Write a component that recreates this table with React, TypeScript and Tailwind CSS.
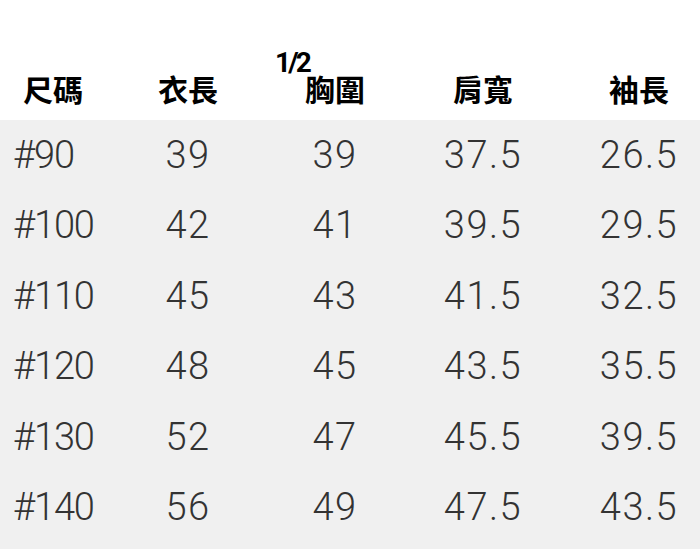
import React from 'react';

const rows = [
  ['#90', '39', '39', '37.5', '26.5'],
  ['#100', '42', '41', '39.5', '29.5'],
  ['#110', '45', '43', '41.5', '32.5'],
  ['#120', '48', '45', '43.5', '35.5'],
  ['#130', '52', '47', '45.5', '39.5'],
  ['#140', '56', '49', '47.5', '43.5'],
];

const grid = 'grid grid-cols-[116px_144px_150px_146px_144px]';

const App = () => {
  return (
    <div className="w-[700px] h-[549px] overflow-hidden bg-white">
      <div
        className={`${grid} h-[120px] items-end pb-[17px] text-[30px] font-bold text-black leading-none`}
        style={{ fontFamily: '"Noto Sans CJK TC", "Noto Sans", sans-serif' }}
      >
        <div className="pl-[23px]">尺碼</div>
        <div className="text-center">衣長</div>
        <div className="text-center">
          <span className="relative inline-block">
            <span
              className="absolute left-[-30px] top-[-24px] text-[28px] tracking-[-0.1em]"
              style={{ fontFamily: 'Roboto, "Noto Sans", sans-serif' }}
            >
              1/2
            </span>
            胸圍
          </span>
        </div>
        <div className="text-center">肩寬</div>
        <div className="text-center pl-[22px]">袖長</div>
      </div>
      <div
        className="bg-[#f0f0f0] h-[429px] text-[#333333] text-[38px] font-light tracking-[0.04em]"
        style={{ fontFamily: 'Roboto, "Noto Sans", sans-serif' }}
      >
        {rows.map((r) => (
          <div key={r[0]} className={`${grid} h-[70.5px] items-center`}>
            <div className="pl-[13px] tracking-[-0.03em]">{r[0]}</div>
            <div className="text-center">{r[1]}</div>
            <div className="text-center">{r[2]}</div>
            <div className="text-center">{r[3]}</div>
            <div className="text-center pl-[22px]">{r[4]}</div>
          </div>
        ))}
      </div>
    </div>
  );
};

export default App;
